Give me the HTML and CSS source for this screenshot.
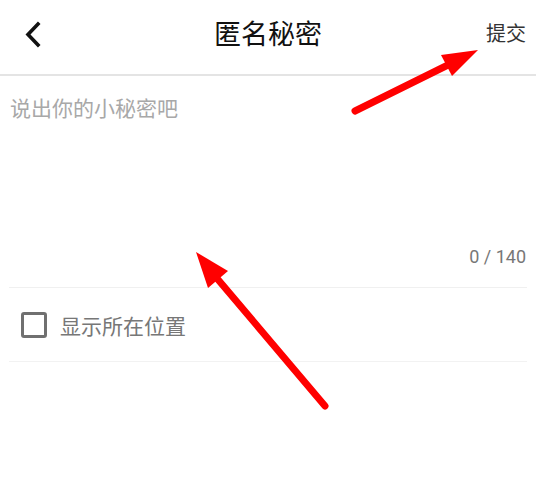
FILE: index.html
```html
<!DOCTYPE html>
<html lang="zh-CN">
<head>
  <meta charset="UTF-8" />
  <meta name="viewport" content="width=device-width, initial-scale=1.0"/>
  <title>匿名秘密</title>
  <link rel="stylesheet" href="styles.css">
</head>
<body>
  <!-- HEADER -->
  <header class="topbar">
    <a class="back" href="#">
      <svg width="22" height="28" viewBox="0 0 22 28">
        <path d="M16 3 L6 13.5 L16 24" fill="none" stroke="#111" stroke-width="3.6" stroke-linecap="square"/>
      </svg>
    </a>
    <h1 class="title">匿名秘密</h1>
    <button class="submit">提交</button>
  </header>

  <main class="page">
    <div class="editor">
      <textarea class="secret" placeholder="说出你的小秘密吧" maxlength="140"></textarea>
      <div class="counter">0 / 140</div>
    </div>

    <label class="option">
      <span class="checkbox"></span>
      <span class="option-text">显示所在位置</span>
    </label>
  </main>

  <!-- annotation arrows -->
  <svg class="marks" width="536" height="494" viewBox="0 0 536 494">
    <g stroke="#ff0000" stroke-width="7" stroke-linecap="round" fill="#ff0000">
      <line x1="355" y1="111" x2="452" y2="63"/>
      <line x1="325" y1="406" x2="215" y2="276"/>
    </g>
    <g fill="#ff0000">
      <polygon points="478,50 441,55 452,76"/>
      <polygon points="196,252 228,271 208,288"/>
    </g>
  </svg>
</body>
</html>
```

FILE: styles.css
```css
* {
  margin: 0;
  padding: 0;
  box-sizing: border-box;
  font-family: "Noto Sans CJK SC", "Noto Sans", sans-serif;
}

html, body {
  background-color: #fff;
}

body {
  color: #222;
  position: relative;
  min-height: 494px;
}

/* Top bar */
.topbar {
  height: 76px;
  display: flex;
  align-items: center;
  justify-content: space-between;
  padding: 0 10px 0 22px;
  border-bottom: 2px solid #e4e4e4;
  position: relative;
}

.back {
  display: flex;
  align-items: center;
  height: 28px;
  margin-top: -5px;
}

.title {
  position: absolute;
  left: 0;
  right: 0;
  top: 14px;
  text-align: center;
  font-size: 27px;
  font-weight: normal;
  color: #111;
  line-height: 38px;
  pointer-events: none;
}

.submit {
  background: none;
  border: none;
  font-size: 20px;
  color: #333;
  margin-top: -10px;
  cursor: pointer;
}

/* Editor */
.editor {
  padding: 17px 1px 18px;
  margin: 0 9px;
  border-bottom: 1px solid #f0f0f0;
}

.secret {
  display: block;
  width: 100%;
  height: 152px;
  border: none;
  outline: none;
  resize: none;
  font-size: 21px;
  line-height: 28px;
  color: #333;
}

.secret::placeholder {
  color: #a8a8a8;
}

.counter {
  text-align: right;
  font-family: Roboto, "Noto Sans", sans-serif;
  font-size: 18px;
  line-height: 24px;
  color: #777;
}

/* Location option */
.option {
  display: flex;
  align-items: center;
  gap: 13px;
  height: 74px;
  margin: 0 9px;
  padding-left: 12px;
  border-bottom: 1px solid #f2f2f2;
  cursor: pointer;
}

.checkbox {
  width: 26px;
  height: 26px;
  border: 3px solid #707070;
  border-radius: 3px;
}

.option-text {
  font-size: 21px;
  color: #777;
}

/* Arrows drawn over the page */
.marks {
  position: absolute;
  top: 0;
  left: 0;
  width: 536px;
  height: 494px;
  pointer-events: none;
}
```
